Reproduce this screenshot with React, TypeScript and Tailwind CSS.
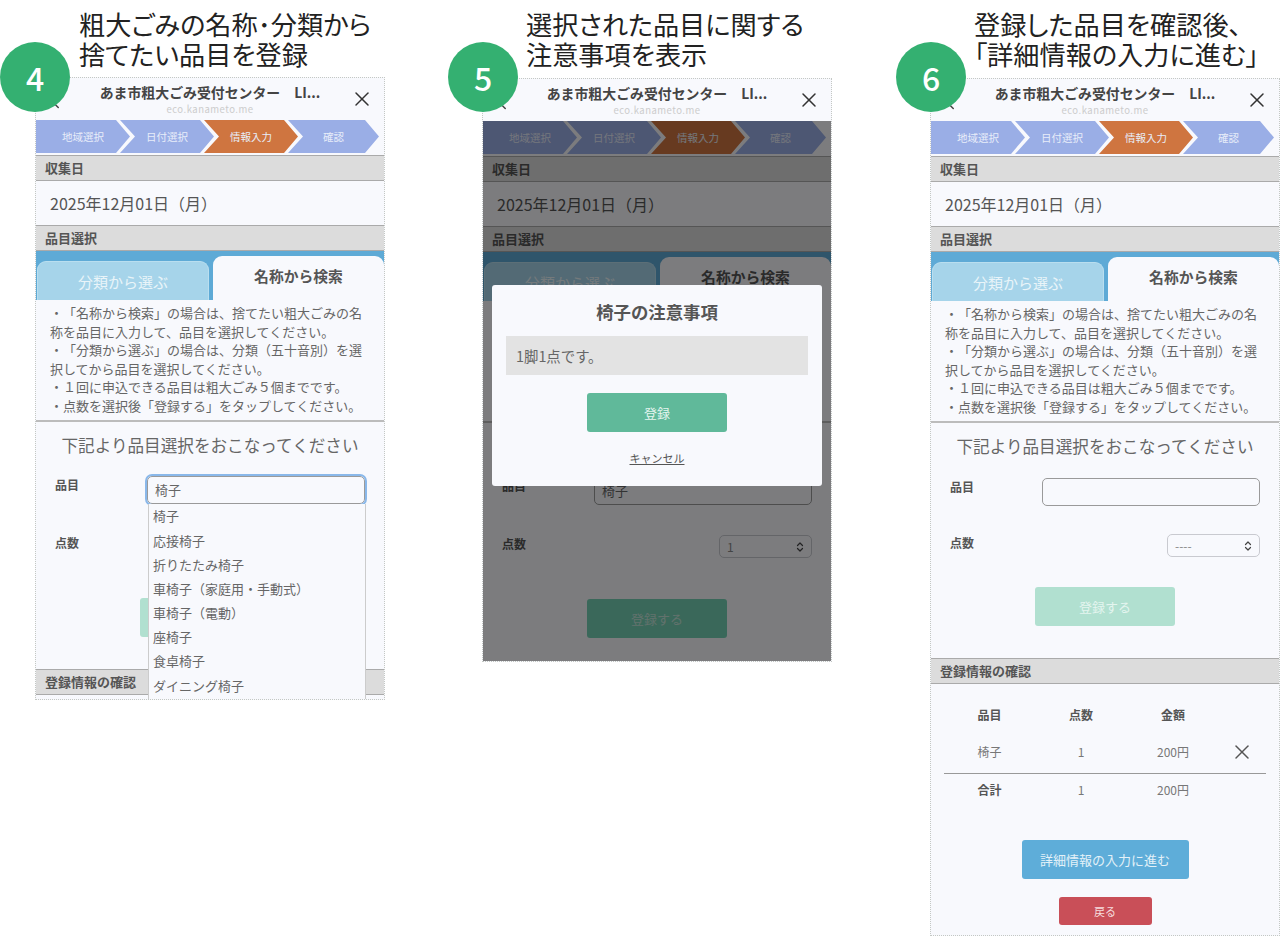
import { ChevronLeft, ChevronsUpDown, X } from 'lucide-react';

const steps = ['地域選択', '日付選択', '情報入力', '確認'];
const suggestions = ['椅子', '応接椅子', '折りたたみ椅子', '車椅子（家庭用・手動式）', '車椅子（電動）', '座椅子', '食卓椅子', 'ダイニング椅子'];

function SectionBar({ title }: { title: string }) {
  return (
    <div className="flex h-[26px] items-center border-y border-[#aaaaaa] bg-[#dcdcdc] pl-[9px] text-[13px] font-bold text-[#555555]">
      {title}
    </div>
  );
}

function Steps() {
  return (
    <div className="flex h-[33px] w-[345px]">
      {steps.map((step, i) => (
        <div
          key={step}
          className={`flex h-full shrink-0 items-center justify-center text-[10.5px] text-[#e8edf9] ${
            i === 3 ? 'w-[91px]' : 'w-[94px]'
          } ${i === 2 ? 'bg-[#cf7540]' : 'bg-[#9aaee6]'} ${
            i === 0
              ? '[clip-path:polygon(0_0,calc(100%-14px)_0,100%_50%,calc(100%-14px)_100%,0_100%)]'
              : 'ml-[-10px] [clip-path:polygon(0_0,calc(100%-14px)_0,100%_50%,calc(100%-14px)_100%,0_100%,15px_50%)]'
          }`}
        >
          {step}
        </div>
      ))}
    </div>
  );
}

function Phone({
  height,
  query,
  count,
  inputTop,
  selectTop,
  buttonTop,
  focused,
  confirm,
  dimmed,
}: {
  height: string;
  query: string;
  count: string;
  inputTop: string;
  selectTop: string;
  buttonTop: string;
  focused?: boolean;
  confirm?: boolean;
  dimmed?: boolean;
}) {
  return (
    <div className={`relative w-[350px] overflow-hidden border border-dotted border-[#c4c8c4] bg-[#f8f9fd] ${height}`}>
      <div className="relative flex h-[42px] flex-col items-center pt-[3px]">
        <ChevronLeft className="absolute left-[11px] top-[16px] h-[18px] w-[18px] text-[#444444]" />
        <div className="text-[13.9px] font-bold leading-[22px] text-[#444444]">あま市粗大ごみ受付センター　LI...</div>
        <div className="text-[9.5px] leading-[12px] tracking-[0.5px] text-[#cccccc]">eco.kanameto.me</div>
        <X className="absolute right-[10px] top-[9px] h-[24px] w-[24px] text-[#333333]" strokeWidth={1.5} />
      </div>
      <Steps />
      <div className="h-[2px]" />
      <SectionBar title="収集日" />
      <div className="flex h-[44px] items-center pl-[14px] text-[16px] text-[#555555]">2025年12月01日（月）</div>
      <SectionBar title="品目選択" />
      <div className="flex h-[49px] items-end gap-[4px] bg-[#5eaad6]">
        <div className="ml-[1px] flex h-[39px] w-[173px] items-center justify-center rounded-t-[9px] border border-b-0 border-[#b9deef] bg-[#a6d4ea] pt-[3px] text-[15px] text-[#e9f4f9]">
          分類から選ぶ
        </div>
        <div className="flex h-[44px] w-[172px] items-start justify-center rounded-t-[9px] bg-[#f8f9fd] pt-[9px] text-[14.8px] font-bold text-[#555555]">
          名称から検索
        </div>
      </div>
      <div className="h-[120px] pl-[14px] pr-[20px] pt-[4px] text-[13px] leading-[18.6px] text-[#666666] [text-spacing-trim:space-all]">
        ・「名称から検索」の場合は、捨てたい粗大ごみの名称を品目に入力して、品目を選択してください。
        <br />
        ・「分類から選ぶ」の場合は、分類（五十音別）を選択してから品目を選択してください。
        <br />
        ・１回に申込できる品目は粗大ごみ５個までです。
        <br />
        ・点数を選択後「登録する」をタップしてください。
      </div>
      <div className="h-[2px] bg-[#bcbcbc]" />
      <div className="relative">
        <div className="flex h-[46px] items-center justify-center text-[16.6px] text-[#666666]">下記より品目選択をおこなってください</div>
        <div className={`flex h-[28px] justify-between pl-[19px] pr-[19px] ${inputTop}`}>
          <span className="text-[12px] font-bold leading-[18px] text-[#555555]">品目</span>
          <div
            className={`flex h-[28px] w-[218px] items-center rounded-[5px] border border-[#9a9a9a] pl-[7px] text-[13px] text-[#666666] ${
              focused ? 'outline-2 outline-[#8ab8ea]' : ''
            }`}
          >
            {query}
          </div>
        </div>
        <div className={`flex h-[23px] justify-between pl-[19px] pr-[19px] ${selectTop}`}>
          <span className="text-[12px] font-bold leading-[18px] text-[#555555]">点数</span>
          <div className="flex h-[23px] w-[93px] items-center justify-between rounded-[5px] border border-[#c9cad0] pl-[7px] pr-[5px] text-[12px] text-[#888888]">
            {count}
            <ChevronsUpDown className="h-[12px] w-[12px] text-[#444444]" strokeWidth={2.4} />
          </div>
        </div>
        <div className={`flex justify-center ${buttonTop}`}>
          <div
            className={`flex h-[39px] w-[140px] items-center justify-center rounded-[3px] text-[13px] ${
              dimmed ? 'bg-[#74d0b4] text-[#c4e4da]' : 'bg-[#b1e0d0] text-[#e4f5ef]'
            }`}
          >
            登録する
          </div>
        </div>
        <div className="h-[32px]" />
        {focused && (
          <div className="absolute left-[112px] top-[82px] h-[200px] w-[218px] border-x border-[#cccccc] bg-[#f8f9fd] text-[13px] text-[#666666]">
            {suggestions.map((item) => (
              <div key={item} className="flex h-[24.2px] items-center pl-[4px]">
                {item}
              </div>
            ))}
          </div>
        )}
      </div>
      <SectionBar title="登録情報の確認" />
      {confirm && (
        <div className="px-[13px] pt-[19px]">
          <div className="grid h-[24px] grid-cols-[91px_92px_92px_46px] items-center text-center text-[12px] font-bold text-[#555555]">
            <span>品目</span>
            <span>点数</span>
            <span>金額</span>
            <span />
          </div>
          <div className="mt-[12px] grid h-[25px] grid-cols-[91px_92px_92px_46px] items-center text-center text-[12px] text-[#777777]">
            <span>椅子</span>
            <span>1</span>
            <span>200円</span>
            <X className="mx-auto h-[24px] w-[24px] text-[#555555]" strokeWidth={1.5} />
          </div>
          <div className="mt-[9px] h-[1px] bg-[#999999]" />
          <div className="mt-[3px] grid h-[25px] grid-cols-[91px_92px_92px_46px] items-center text-center text-[12px] text-[#777777]">
            <span className="font-bold text-[#555555]">合計</span>
            <span>1</span>
            <span>200円</span>
            <span />
          </div>
          <div className="mt-[38px] flex justify-center">
            <div className="flex h-[39px] w-[167px] items-center justify-center rounded-[3px] bg-[#5eadd9] text-[13px] text-[#e3f1f8]">詳細情報の入力に進む</div>
          </div>
          <div className="mt-[18px] flex justify-center">
            <div className="flex h-[28px] w-[93px] items-center justify-center rounded-[3px] bg-[#c94f58] text-[11px] text-[#f6dcdd]">戻る</div>
          </div>
        </div>
      )}
      {dimmed && (
        <>
          <div className="absolute inset-x-0 bottom-0 top-[42px] bg-black/50" />
          <div className="absolute left-[9px] top-[206px] flex h-[201px] w-[330px] flex-col items-center rounded-[3px] bg-[#f8f9fd] px-[14px]">
            <div className="flex h-[51px] items-center pt-[4px] text-[17.4px] font-bold text-[#555555]">椅子の注意事項</div>
            <div className="flex h-[39px] w-full items-center bg-[#e3e3e3] pl-[10px] text-[14.4px] text-[#666666]">1脚1点です。</div>
            <div className="mt-[18px] flex h-[39px] w-[140px] items-center justify-center rounded-[3px] bg-[#60b99a] text-[13px] text-[#e4f5ef]">登録</div>
            <div className="mt-[18px] text-[11px] text-[#555555] underline">キャンセル</div>
          </div>
        </>
      )}
    </div>
  );
}

function Badge({ n, place }: { n: number; place: string }) {
  return (
    <div className={`absolute z-10 flex h-[70px] w-[70px] items-center justify-center rounded-full bg-[#34b071] text-[32px] font-medium text-white ${place}`}>
      {n}
    </div>
  );
}

function Caption({ lines }: { lines: string[] }) {
  return (
    <div className="ml-[44px] h-[78px] pt-[9px] text-[26.2px] leading-[30px] whitespace-nowrap text-[#222222] [font-feature-settings:'palt']">
      {lines.map((line) => (
        <div key={line}>{line}</div>
      ))}
    </div>
  );
}

export default function App() {
  return (
    <div className="flex h-[936px] w-[1280px] items-start overflow-hidden bg-white font-['Noto_Sans_CJK_JP','Noto_Sans',sans-serif]">
      <div className="ml-[35px] w-[350px]">
        <Caption lines={['粗大ごみの名称･分類から', '捨てたい品目を登録']} />
        <div className="relative mt-[-1px]">
          <Badge n={4} place="left-[-35px] top-[-35px]" />
          <Phone height="h-[623px]" query="椅子" count="1" inputTop="mt-[8px]" selectTop="mt-[30px]" buttonTop="mt-[41px]" focused />
        </div>
      </div>
      <div className="ml-[97px] w-[350px]">
        <Caption lines={['選択された品目に関する', '注意事項を表示']} />
        <div className="relative">
          <Badge n={5} place="left-[-34px] top-[-36px]" />
          <Phone height="h-[584px]" query="椅子" count="1" inputTop="mt-[8px]" selectTop="mt-[30px]" buttonTop="mt-[41px]" dimmed />
        </div>
      </div>
      <div className="ml-[98px] w-[350px]">
        <Caption lines={['登録した品目を確認後、', '「詳細情報の入力に進む」']} />
        <div className="relative">
          <Badge n={6} place="left-[-34px] top-[-36px]" />
          <Phone height="h-[858px]" query="" count="----" inputTop="mt-[9px]" selectTop="mt-[28px]" buttonTop="mt-[30px]" confirm />
        </div>
      </div>
    </div>
  );
}
